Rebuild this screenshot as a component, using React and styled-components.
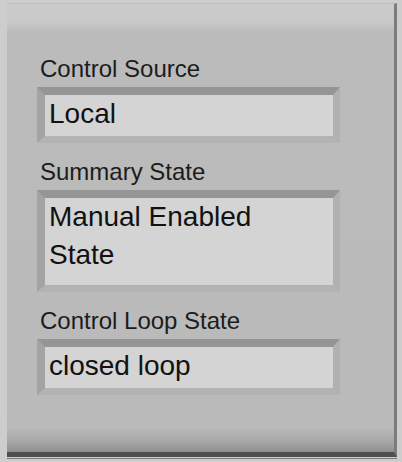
import React from "react";
import styled, { createGlobalStyle } from "styled-components";

const GlobalStyle = createGlobalStyle`
  html, body {
    margin: 0;
    padding: 0;
    background: #cdcdcd;
  }
  body {
    font-family: "Liberation Sans", Arial, sans-serif;
  }
`;

const Frame = styled.div`
  width: 402px;
  height: 462px;
  overflow: hidden;
  display: flex;
  flex-direction: column;
`;

const Panel = styled.div`
  margin: 3px 0 0 7px;
  width: 390px;
  height: 454px;
  box-sizing: border-box;
  border-top: 1px solid #bdbdbd;
  border-right: 3px solid #7c7c7c;
  border-bottom: 5px solid #4f4f4f;
  background: linear-gradient(
    to bottom,
    #cbcbcb 0px,
    #c8c8c8 19px,
    #bbbbbb 28px,
    #bababa 424px,
    #a2a2a2 440px,
    #8f8f8f 448px
  );
  padding: 52px 0 0 30px;
  display: flex;
  flex-direction: column;
  gap: 16px;
`;

const BaseLine = styled.div`
  margin: 1px 0 0 7px;
  width: 390px;
  height: 1px;
  background: #7a7a7a;
`;

const Field = styled.div`
  display: flex;
  flex-direction: column;
`;

const Label = styled.div`
  font-size: 24px;
  line-height: 26px;
  color: #1c1c1c;
  padding-left: 3px;
  margin-bottom: 5px;
`;

const Readout = styled.div`
  width: 280px;
  height: ${(p) => p.$height}px;
  border-style: solid;
  border-width: 8px 7px 7px 8px;
  border-color: #959595 #b1b1b1 #b3b3b3 #a3a3a3;
  background: #d4d4d4;
  padding: 0 4px;
  box-sizing: content-box;
  font-size: 28px;
  line-height: 38px;
  color: #111;
  white-space: pre-line;
  overflow: hidden;
`;

const fields = [
  { label: "Control Source", value: "Local", height: 41 },
  { label: "Summary State", value: "Manual Enabled\nState", height: 87 },
  { label: "Control Loop State", value: "closed loop", height: 41 },
];

const App = () => (
  <>
    <GlobalStyle />
    <Frame>
      <Panel>
        {fields.map((f) => (
          <Field key={f.label}>
            <Label>{f.label}</Label>
            <Readout $height={f.height}>{f.value}</Readout>
          </Field>
        ))}
      </Panel>
      <BaseLine />
    </Frame>
  </>
);

export default App;
